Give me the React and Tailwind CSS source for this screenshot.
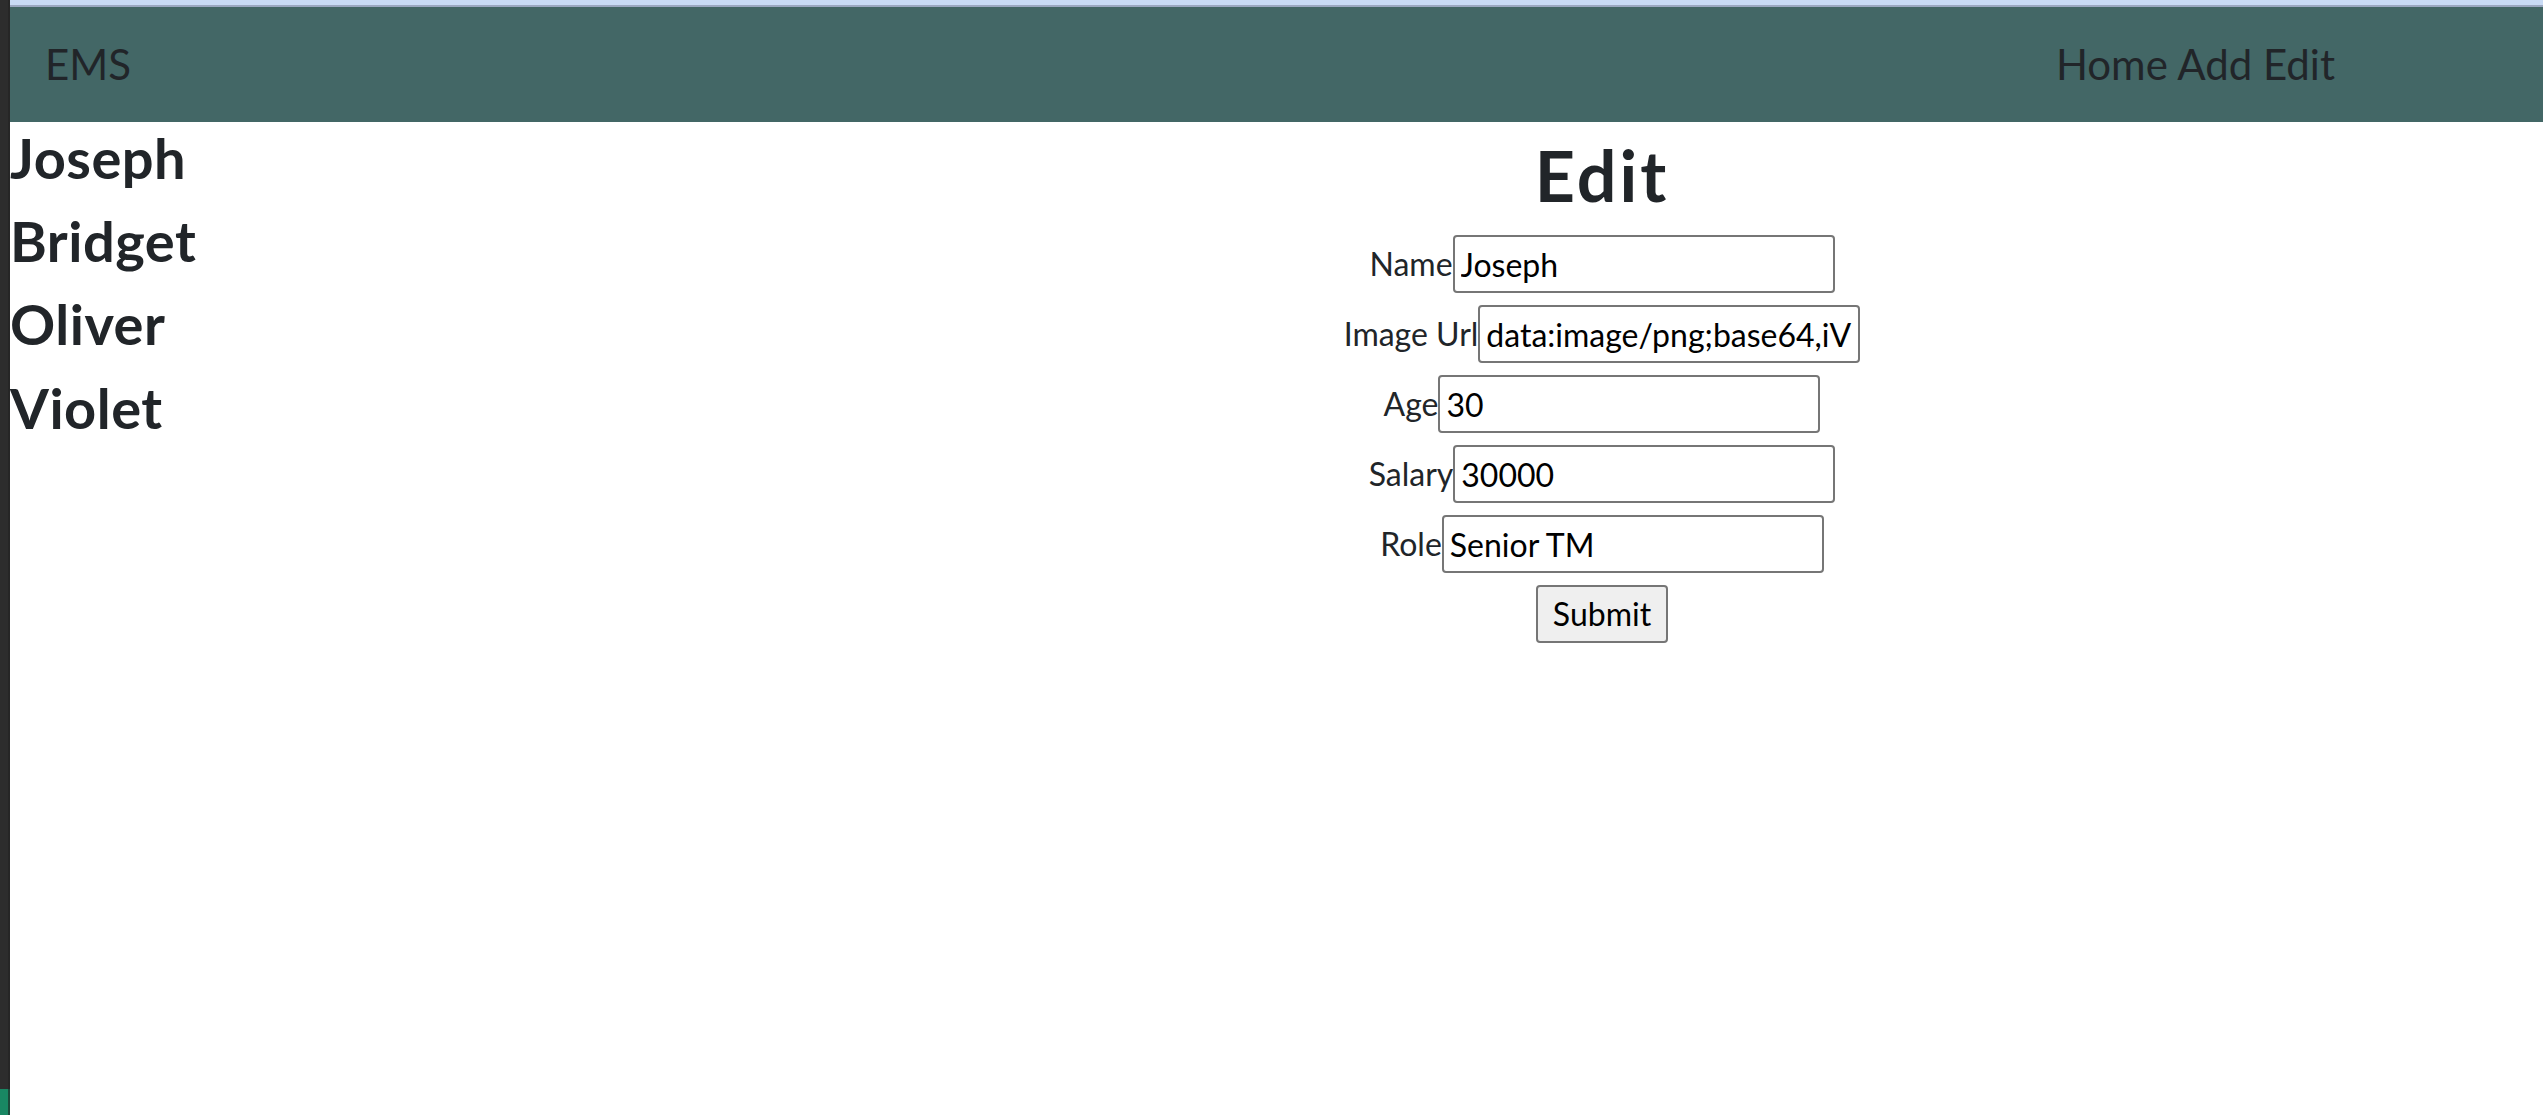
import React, { useState } from 'react';

const employees = ['Joseph', 'Bridget', 'Oliver', 'Violet'];

const FormRow = ({ label, value, onChange }) => (
  <div className="flex items-center justify-center">
    <label className="text-[32px] leading-none text-[#212529]">{label}</label>
    <input
      value={value}
      onChange={onChange}
      className="w-[382px] h-[58px] border-2 border-[#767676] rounded-[4px] px-[6px] text-[32px] text-black bg-white outline-none"
    />
  </div>
);

const App = () => {
  const [form, setForm] = useState({
    name: 'Joseph',
    image: 'data:image/png;base64,iVBORw0KGgoAAAANSUhEUgAA',
    age: '30',
    salary: '30000',
    role: 'Senior TM',
  });

  const update = (key) => (e) => setForm({ ...form, [key]: e.target.value });

  return (
    <div className="flex w-full h-[1115px] overflow-hidden bg-white font-['Lato',sans-serif]">
      <div className="w-[10px] flex flex-col bg-[#2d2d2d]">
        <div className="flex-1 border-r-2 border-[#262626]"></div>
        <div className="h-[26px] bg-[#198763] border-r-2 border-[#1d4a3b]"></div>
      </div>

      <div className="flex-1 flex flex-col">
        <div className="h-[5px] bg-[#c9dbf5]"></div>
        <div className="h-[2px] bg-[#9ba8c1]"></div>

        <nav className="h-[115px] bg-[#436766] flex items-center justify-between pl-[35px] pr-[208px] text-[42px] font-normal text-[#212529]">
          <span>EMS</span>
          <div>
            <span>Home</span> <span>Add</span> <span>Edit</span>
          </div>
        </nav>

        <div className="flex flex-1">
          <div className="w-[651px] pt-[2px]">
            {employees.map((name) => (
              <h2 key={name} className="text-[56px] leading-[1.2] tracking-[0.5px] font-bold text-[#212529] mb-[16px]">
                {name}
              </h2>
            ))}
          </div>

          <div className="flex-1 flex flex-col items-center">
            <h1 className="mt-[11px] mb-[18px] text-[70px] leading-[1.2] tracking-[3px] font-bold text-[#212529]">Edit</h1>
            <div className="flex flex-col gap-[12px] items-center">
              <FormRow label="Name" value={form.name} onChange={update('name')} />
              <FormRow label="Image Url" value={form.image} onChange={update('image')} />
              <FormRow label="Age" value={form.age} onChange={update('age')} />
              <FormRow label="Salary" value={form.salary} onChange={update('salary')} />
              <FormRow label="Role" value={form.role} onChange={update('role')} />
              <button className="w-[132px] h-[58px] border-2 border-[#767676] rounded-[4px] bg-[#efefef] text-[32px] text-black">
                Submit
              </button>
            </div>
          </div>
        </div>
      </div>
    </div>
  );
};

export default App;
